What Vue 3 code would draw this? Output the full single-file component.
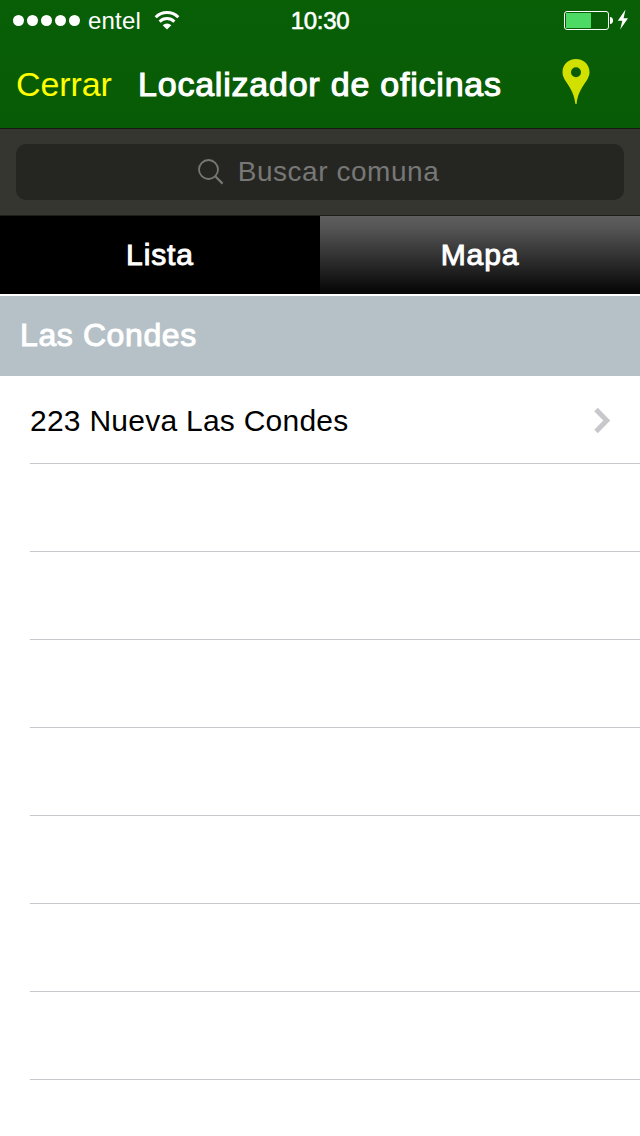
<template>
  <div class="screen">
    <header class="top">
      <div class="status-bar">
        <div class="carrier">
          <span v-for="n in 5" :key="n" class="dot"></span>
          <span class="carrier-name">entel</span>
          <svg class="wifi" width="26" height="20" viewBox="0 0 26 20">
            <path d="M1.7 7.2 A16 16 0 0 1 24.3 7.2" fill="none" stroke="#fff" stroke-width="3" />
            <path d="M5.6 11.6 A10.5 10.5 0 0 1 20.4 11.6" fill="none" stroke="#fff" stroke-width="3" />
            <path d="M13 19.5 L8.7 15.2 A6.1 6.1 0 0 1 17.3 15.2 Z" fill="#fff" />
          </svg>
        </div>
        <div class="clock">10:30</div>
        <div class="power">
          <svg width="66" height="24" viewBox="0 0 66 24">
            <rect x="0.5" y="3.5" width="44" height="18" rx="2.5" fill="none" stroke="#fff" />
            <rect x="2" y="5" width="25" height="15" fill="#4cd964" />
            <path d="M46 9 Q49 9.2 49 12.5 Q49 15.8 46 16 Z" fill="#fff" />
            <path d="M61.5 1.5 L53.8 12.8 L58.3 12.8 L56.2 21.5 L64 10.2 L59.6 10.2 Z" fill="#fff" />
          </svg>
        </div>
      </div>
      <div class="nav-bar">
        <a class="close">Cerrar</a>
        <h1 class="title">Localizador de oficinas</h1>
        <svg class="pin" width="28" height="46" viewBox="0 0 28 46">
          <path
            d="M14 0 C6.2 0 0.5 5.8 0.5 13.3 C0.5 22.5 11.6 27.5 13.4 45 L14.6 45 C16.4 27.5 27.5 22.5 27.5 13.3 C27.5 5.8 21.8 0 14 0 Z M14 8.3 A5 5 0 1 1 14 18.3 A5 5 0 1 1 14 8.3 Z"
            fill="#d2e000"
            fill-rule="evenodd"
          />
        </svg>
      </div>
    </header>

    <div class="search-bar">
      <div class="search-field">
        <svg class="glass" width="26" height="26" viewBox="0 0 26 26">
          <circle cx="10.5" cy="10.5" r="9.5" fill="none" stroke="#777776" stroke-width="1.8" />
          <path d="M17.2 17.2 L24.6 24.6" stroke="#777776" stroke-width="2.2" />
        </svg>
        <span class="placeholder">Buscar comuna</span>
      </div>
    </div>

    <div class="tabs">
      <button
        v-for="tab in tabs"
        :key="tab"
        class="tab"
        :class="{ active: tab === activeTab }"
        @click="activeTab = tab"
      >
        <span>{{ tab }}</span>
      </button>
    </div>

    <h2 class="section">Las Condes</h2>

    <ul class="rows">
      <li v-for="(office, i) in offices" :key="i" class="row">
        <span class="name">{{ office }}</span>
        <svg v-if="office" class="chevron" width="18" height="28" viewBox="0 0 18 28">
          <path d="M3 2.5 L13.8 13.5 L3 24.5" fill="none" stroke="#c7c7cc" stroke-width="5" />
        </svg>
      </li>
    </ul>
  </div>
</template>

<script setup>
import { ref } from 'vue';

const tabs = ['Lista', 'Mapa'];
const activeTab = ref('Lista');

// empty strings fill the rest of the table with blank rows
const offices = ['223 Nueva Las Condes', '', '', '', '', '', '', '', ''];
</script>

<style>
body {
  margin: 0;
  background: #fff;
}
</style>

<style scoped>
.screen {
  width: 640px;
  height: 1136px;
  overflow: hidden;
  background: #fff;
  font-family: 'Liberation Sans', Arial, sans-serif;
  box-sizing: border-box;
}

.top {
  height: 128px;
  background: linear-gradient(#085f06, #085b06);
}

.status-bar {
  display: grid;
  grid-template-columns: 1fr 80px 1fr;
  align-items: center;
  height: 40px;
  color: #fff;
  font-size: 24px;
}

.carrier {
  display: flex;
  align-items: center;
  padding-left: 13px;
}

.dot {
  width: 11px;
  height: 11px;
  margin-right: 3px;
  border-radius: 50%;
  background: #fff;
}

.carrier-name {
  margin-left: 5px;
  padding-top: 2px;
  letter-spacing: 0.2px;
  line-height: 38px;
}

.wifi {
  margin-left: 13px;
}

.clock {
  padding-top: 2px;
  text-align: center;
  line-height: 38px;
  letter-spacing: -0.3px;
  -webkit-text-stroke: 0.6px #fff;
}

.power {
  display: flex;
  justify-content: flex-end;
  padding-right: 10px;
}

.nav-bar {
  display: flex;
  align-items: center;
  height: 88px;
  padding-left: 16px;
}

.close {
  width: 122px;
  color: #ffff00;
  font-size: 34px;
  letter-spacing: -0.1px;
}

.title {
  flex: 1;
  margin: 0;
  color: #fff;
  font-size: 34px;
  font-weight: normal;
  letter-spacing: 0.78px;
  white-space: nowrap;
  -webkit-text-stroke: 1.1px #fff;
}

.pin {
  margin: 0 50px 4px 0;
}

.search-bar {
  height: 88px;
  padding: 15px 16px;
  box-sizing: border-box;
  border-top: 1px solid #171915;
  border-bottom: 1px solid #1e1f1b;
  background: #363630;
}

.search-field {
  display: flex;
  align-items: center;
  justify-content: center;
  height: 56px;
  padding-right: 3px;
  box-sizing: border-box;
  border-radius: 10px;
  background: #252622;
}

.glass {
  margin-right: 14px;
}

.placeholder {
  color: #777776;
  font-size: 28px;
  letter-spacing: 0.55px;
}

.tabs {
  display: flex;
  height: 78px;
  border-bottom: 2px solid #fff;
}

.tab {
  flex: 1;
  padding: 0;
  border: none;
  background: linear-gradient(#5e5e5e, #555 15%, #080808 96%);
  color: #fff;
  font-family: inherit;
  font-size: 30px;
  letter-spacing: 0.9px;
  -webkit-text-stroke: 1px #fff;
}

.tab.active {
  background: #000;
}

.section {
  height: 80px;
  margin: 0;
  padding-left: 20px;
  background: #b6c1c7;
  color: #fff;
  font-size: 32px;
  font-weight: normal;
  line-height: 79px;
  letter-spacing: 0.6px;
  -webkit-text-stroke: 1px #fff;
}

.rows {
  margin: 0;
  padding: 0 0 0 30px;
  list-style: none;
}

.row {
  display: flex;
  align-items: center;
  justify-content: space-between;
  height: 88px;
  padding: 2px 29px 0 0;
  box-sizing: border-box;
  border-bottom: 1px solid #c8c7cc;
}

.name {
  color: #000;
  font-size: 30px;
  letter-spacing: 0.25px;
}
</style>
